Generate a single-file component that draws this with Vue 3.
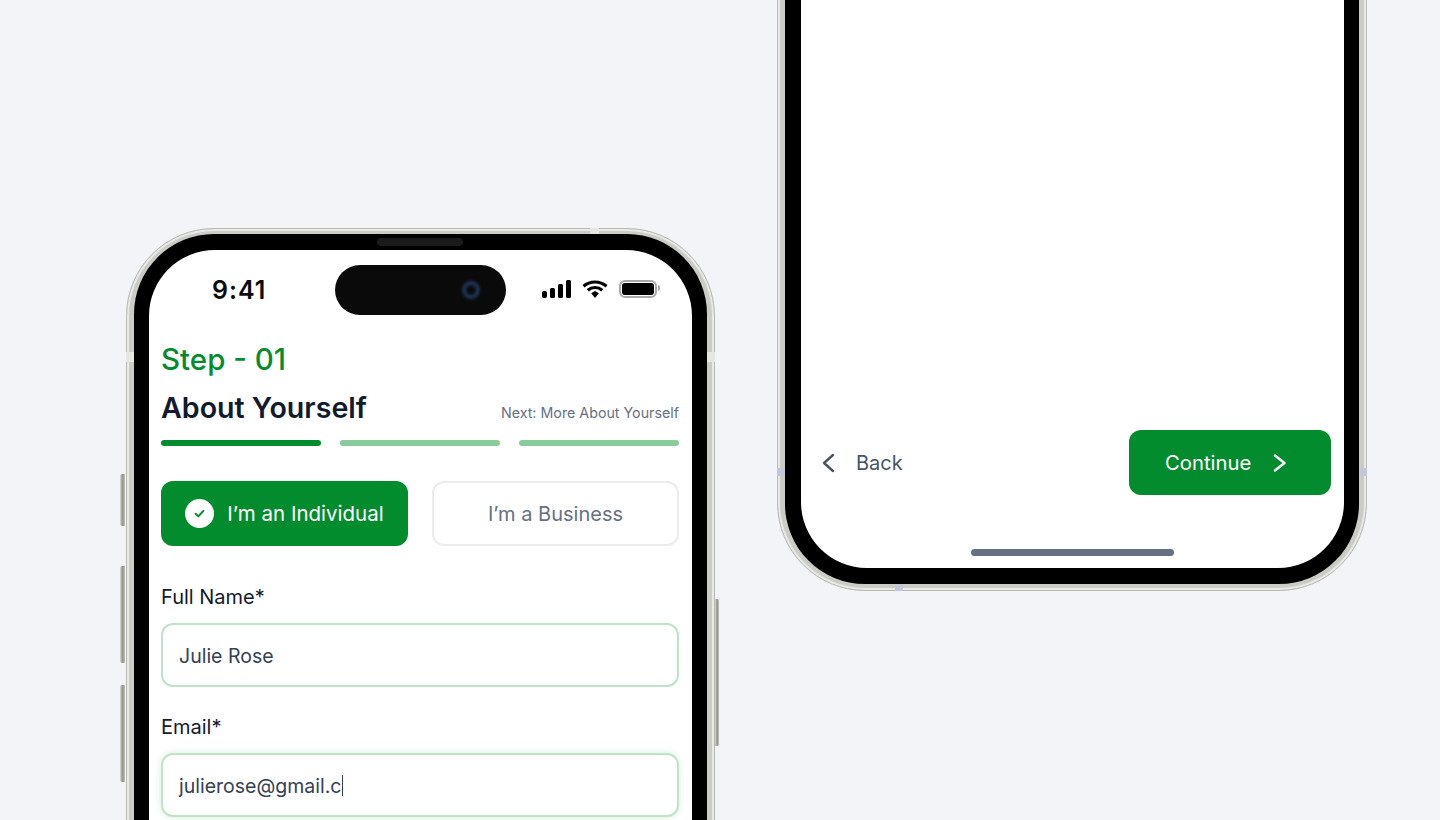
<template>
  <div class="stage">
    <!-- 左边手机：表单页，下半截被画面裁掉 -->
    <div class="phone phone-left">
      <span class="side-btn btn-a"></span>
      <span class="side-btn btn-b"></span>
      <span class="side-btn btn-c"></span>
      <span class="side-btn btn-d"></span>
      <span class="band band-left"></span>
      <span class="band band-right"></span>
      <span class="band band-top"></span>
      <div class="bezel">
        <span class="speaker"></span>
        <div class="screen">
          <div class="status">
            <span class="time">9:41</span>
            <div class="island"><span class="lens"></span></div>
            <div class="status-icons">
              <svg width="29" height="18" viewBox="0 0 29 18">
                <rect x="0" y="11" width="5" height="7" rx="2" />
                <rect x="8" y="8" width="5" height="10" rx="1.5" />
                <rect x="16" y="4" width="5" height="14" rx="1.5" />
                <rect x="24" y="0" width="5" height="18" rx="1.5" />
              </svg>
              <svg width="26" height="18" viewBox="0 0 26 18">
                <path d="M1.5 6.2C8 .6 18 .6 24.5 6.2" class="wifi" />
                <path d="M5.8 10.2C10 6.6 16 6.6 20.2 10.2" class="wifi" />
                <path d="M9.2 13.2 13 10.9l3.8 2.3L13 18z" />
              </svg>
              <div class="battery"><span class="cell"></span><span class="nub"></span></div>
            </div>
          </div>

          <div class="form">
            <div class="step">Step - 01</div>
            <div class="title-row">
              <h1>About Yourself</h1>
              <span class="next">Next: More About Yourself</span>
            </div>
            <div class="progress">
              <span v-for="(on, i) in steps" :key="i" :class="{ on }"></span>
            </div>
            <div class="choice">
              <button class="opt active">
                <span class="tick">
                  <svg width="13" height="13" viewBox="0 0 13 13">
                    <path d="M2.6 6.8 5.3 9.4 10.4 3.9" />
                  </svg>
                </span>
                I’m an Individual
              </button>
              <button class="opt">I’m a Business</button>
            </div>
            <label class="field-label">Full Name*</label>
            <div class="input">Julie Rose</div>
            <label class="field-label second">Email*</label>
            <div class="input focus">julierose@gmail.c<i class="caret"></i></div>
          </div>
        </div>
      </div>
    </div>

    <!-- 右边手机：只露出底部，按钮区 -->
    <div class="phone phone-right">
      <span class="band band-left blue"></span>
      <span class="band band-right blue"></span>
      <span class="band band-bottom blue"></span>
      <div class="bezel">
        <div class="screen screen-bottom">
          <div class="actions">
            <button class="back">
              <svg width="14" height="20" viewBox="0 0 14 20">
                <path d="M12 2 3 10l9 8" />
              </svg>
              Back
            </button>
            <button class="continue">
              Continue
              <svg width="14" height="20" viewBox="0 0 14 20">
                <path d="M3 2.500 12.500 10 3 17.500" />
              </svg>
            </button>
          </div>
          <span class="home-bar"></span>
        </div>
      </div>
    </div>
  </div>
</template>

<script setup>
const steps = [true, false, false]
</script>

<style>
html, body { margin: 0; background: #f2f4f8; }
</style>

<style scoped>
.stage {
  width: 1440px;
  height: 820px;
  overflow: hidden;
  display: flex;
  align-items: flex-start;
  padding-left: 126px;
  gap: 62px;
  box-sizing: border-box;
  background: #f2f4f8;
  font-family: Inter, "Liberation Sans", sans-serif;
}

/* 手机外框 */
.phone {
  position: relative;
  flex: none;
  width: 589px;
  height: 800px;
  box-sizing: border-box;
  padding: 5px 7px;
  border-radius: 88px;
  border: 1px solid #b9bab4;
  background: #cbccc6;
  box-shadow: inset 0 0 0 2px #e9eae6;
}
.phone-left { margin-top: 228px; }
.phone-right { width: 590px; margin-top: -209px; padding: 6px 7px; }
.bezel {
  position: relative;
  height: 100%;
  box-sizing: border-box;
  padding: 16px 15px;
  border-radius: 80px;
  background: #000;
}
.phone-right .bezel { padding: 16px 15px 16px 16px; }
.screen {
  height: 100%;
  box-sizing: border-box;
  border-radius: 66px;
  background: #fff;
}

.side-btn {
  position: absolute;
  width: 5px;
  left: -7px;
  background: linear-gradient(90deg, #d9d9d4, #8f908a 55%, #c5c6c0);
  border-radius: 2px 0 0 2px;
}
.btn-a { top: 245px; height: 52px; }
.btn-b { top: 337px; height: 97px; }
.btn-c { top: 456px; height: 97px; }
.btn-d { left: auto; right: -5px; width: 4px; top: 370px; height: 147px; border-radius: 0 2px 2px 0; }

.band { position: absolute; background: #e6e7e4; }
.band-left { left: -1px; top: 123px; width: 8px; height: 10px; }
.band-right { right: -1px; top: 123px; width: 8px; height: 10px; }
.band-top { top: -1px; left: 463px; width: 9px; height: 6px; }
.band-bottom { bottom: -1px; left: 117px; width: 8px; height: 7px; }
.band.blue { background: #c4c8d6; }
.phone-right .band-left, .phone-right .band-right { top: 676px; height: 8px; }

.speaker {
  position: absolute;
  top: 4px;
  left: 243px;
  width: 86px;
  height: 8px;
  border-radius: 4px;
  background: #1a1a1a;
}

/* 状态栏 */
.status {
  position: relative;
  height: 79px;
  display: flex;
  align-items: center;
  justify-content: space-between;
  padding: 0 35px 0 63px;
  box-sizing: border-box;
}
.time {
  font-size: 25px;
  font-weight: 600;
  letter-spacing: 1px;
  color: #0b0b0b;
}
.island {
  position: absolute;
  left: 186px;
  top: 15px;
  width: 171px;
  height: 50px;
  border-radius: 25px;
  background: #0a0a0a;
}
.lens {
  position: absolute;
  left: 126px;
  top: 14px;
  width: 20px;
  height: 22px;
  border-radius: 50%;
  background: radial-gradient(circle, #0a0a0a 22%, #20395f 45%, #0a0a0a 72%);
  filter: blur(1px);
}
.status-icons { display: flex; align-items: center; gap: 11px; margin-bottom: 2px; }
.status-icons svg { display: block; fill: #000; }
.status-icons .wifi { fill: none; stroke: #000; stroke-width: 3.2; }
.battery {
  position: relative;
  width: 38px;
  height: 18px;
  box-sizing: border-box;
  border: 2px solid #a8a8a8;
  border-radius: 6px;
  padding: 1px;
}
.cell { display: block; height: 100%; border-radius: 3px; background: #000; }
.nub {
  position: absolute;
  right: -5px;
  top: 3px;
  width: 2px;
  height: 6px;
  border-radius: 0 2px 2px 0;
  background: #a8a8a8;
}

/* 表单 */
.form { padding: 12px 13px 0 12px; }
.step {
  font-size: 29.500px;
  line-height: 36px;
  font-weight: 500;
  color: #038c2e;
}
.title-row {
  display: flex;
  justify-content: space-between;
  align-items: flex-end;
  margin-top: 13px;
}
h1 {
  margin: 0;
  font-size: 28.600px;
  line-height: 36px;
  font-weight: 600;
  color: #111a2e;
}
.next { font-size: 14.250px; line-height: 26px; color: #667085; }
.progress { display: flex; gap: 19px; margin-top: 14px; }
.progress span {
  flex: 1;
  height: 6px;
  border-radius: 3px;
  background: #88cc9c;
}
.progress span.on { background: #038c2e; }
.choice { display: flex; gap: 24px; margin-top: 35px; }
.opt {
  flex: 1;
  height: 65px;
  display: flex;
  align-items: center;
  justify-content: center;
  gap: 13px;
  border: 2px solid #eaecf0;
  border-radius: 12px;
  background: #fff;
  font: inherit;
  font-size: 20px;
  color: #667085;
}
.opt.active { background: #038c2e; border-color: #038c2e; color: #fff; font-size: 20.500px; }
.tick {
  width: 29px;
  height: 29px;
  border-radius: 50%;
  background: #fff;
  display: flex;
  align-items: center;
  justify-content: center;
}
.tick svg { display: block; }
.tick path { fill: none; stroke: #038c2e; stroke-width: 2; stroke-linecap: round; stroke-linejoin: round; }
.field-label {
  display: block;
  margin-top: 37px;
  font-size: 20px;
  line-height: 28px;
  color: #111a2e;
}
.field-label.second { margin-top: 26px; }
.input {
  margin-top: 12px;
  height: 64px;
  box-sizing: border-box;
  display: flex;
  align-items: center;
  padding: 1px 16px 0;
  border: 2px solid #bfe3ca;
  border-radius: 12px;
  background: #fff;
  font-size: 19.500px;
  color: #344054;
}
.input.focus { box-shadow: 0 0 6px rgba(136, 204, 156, .35); }
.caret { display: inline-block; width: 1px; height: 21px; margin-left: 1px; background: #344054; }

/* 右边手机底部 */
.screen-bottom {
  display: flex;
  flex-direction: column;
  justify-content: flex-end;
  align-items: center;
  padding-bottom: 12px;
}
.actions {
  align-self: stretch;
  display: flex;
  justify-content: space-between;
  align-items: center;
  padding: 0 13px 0 20px;
  margin-bottom: 54px;
}
.actions svg { display: block; fill: none; stroke-width: 2.4; stroke-linecap: round; stroke-linejoin: round; }
.back {
  display: flex;
  align-items: center;
  gap: 21px;
  padding: 0;
  border: 0;
  background: none;
  font: inherit;
  font-size: 20px;
  color: #475467;
}
.back svg { stroke: #475467; }
.continue {
  width: 202px;
  height: 65px;
  display: flex;
  align-items: center;
  gap: 21px;
  padding: 0 0 0 36px;
  border: 0;
  border-radius: 12px;
  background: #038c2e;
  font: inherit;
  font-size: 20.300px;
  color: #fff;
}
.continue svg { stroke: #fff; }
.home-bar {
  width: 203px;
  height: 7px;
  border-radius: 4px;
  background: #667085;
}
</style>
